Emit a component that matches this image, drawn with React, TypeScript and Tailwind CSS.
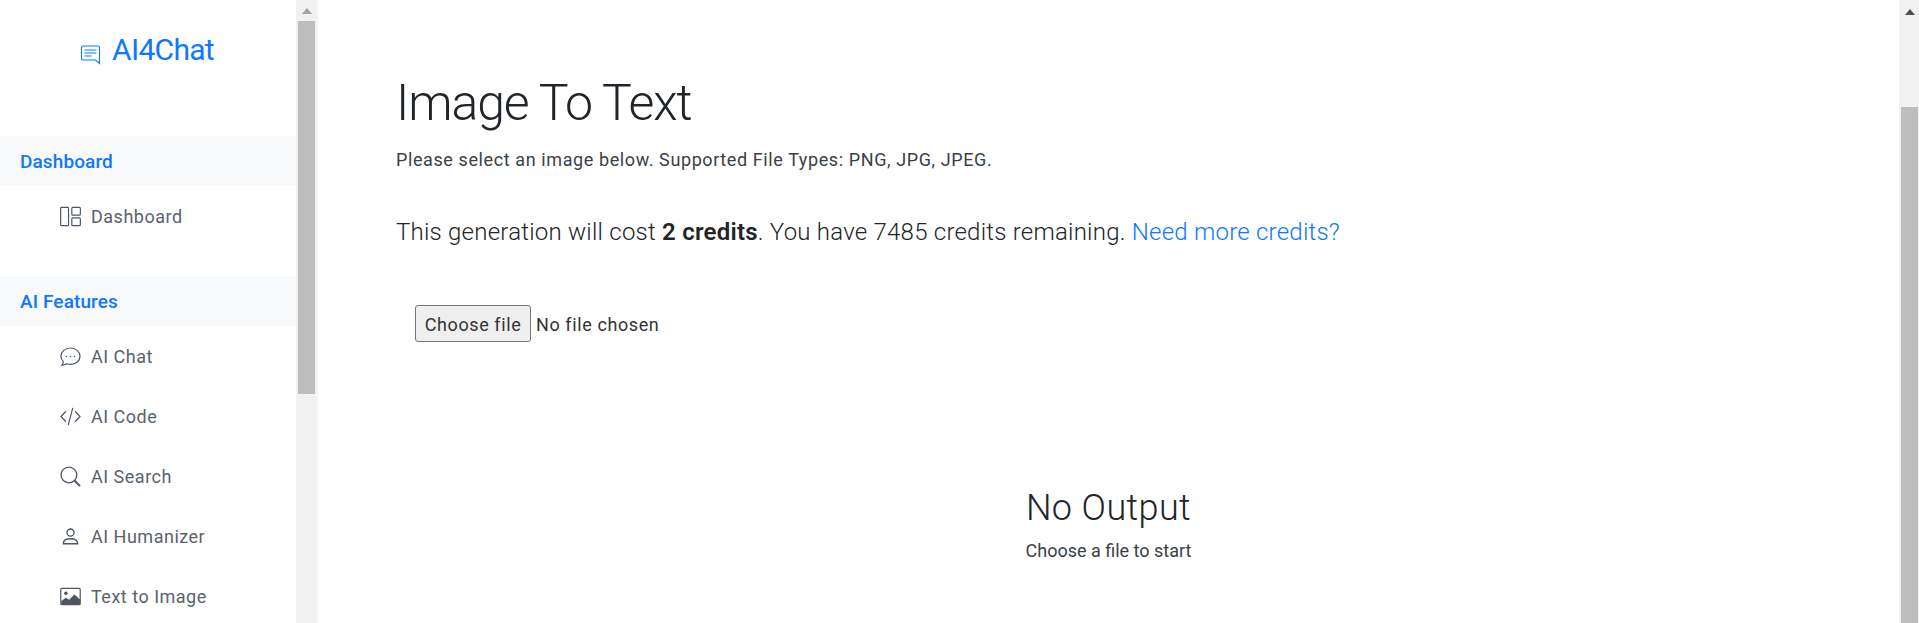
import React from "react";

const Icon = ({ children }: { children: React.ReactNode }) => (
  <svg width="21" height="21" viewBox="0 0 16 16" fill="none" stroke="#4b5563" strokeWidth="0.9" className="shrink-0">{children}</svg>
);

function Item({ icon, label }: { icon: React.ReactNode; label: string }) {
  return (
    <div className="flex h-[60px] shrink-0 items-center gap-[10px] pt-[1px] pl-[60px] text-[18px] tracking-[0.5px] text-[#5a6270]">
      {icon}
      <span>{label}</span>
    </div>
  );
}

function Section({ label }: { label: string }) {
  return (
    <div className="flex h-[50px] shrink-0 items-center bg-[#f8f9fa] pt-[2px] pl-[20px] text-[19px] font-medium tracking-[0.1px] text-[#0d78ff]">{label}</div>
  );
}

export default function App() {
  return (
    <div className="flex h-[623px] w-[1919px] overflow-hidden bg-white font-['Roboto',sans-serif]">
      <aside className="flex w-[296px] shrink-0 flex-col">
        <div className="flex h-[136px] shrink-0 items-start justify-center gap-[11px] pt-[32px] pr-[2px]">
          <svg width="21" height="21" viewBox="0 0 21 21" fill="none" stroke="#0d78ff" strokeWidth="1.1" className="mt-[12px]">
            <path d="M3 2h15a1.5 1.5 0 0 1 1.500 1.500v16l-4-3.500H3a1.500 1.500 0 0 1-1.500-1.500v-11A1.500 1.500 0 0 1 3 2z" />
            <path d="M4.500 6h12M4.500 9h12M4.500 12h7" />
          </svg>
          <span className="text-[30px] leading-[36px] tracking-[-0.7px] text-[#0d78ff]">AI4Chat</span>
        </div>
        <Section label="Dashboard" />
        <Item label="Dashboard" icon={<Icon><rect x="0.500" y="1" width="6" height="14" rx="0.6" /><rect x="9" y="1" width="6.500" height="6" rx="0.8" /><rect x="9" y="9" width="6.500" height="6" rx="0.8" /></Icon>} />
        <div className="h-[30px] shrink-0" />
        <Section label="AI Features" />
        <Item label="AI Chat" icon={<Icon><path d="M8 1.500c4 0 7.300 2.800 7.300 6.300S12 14 8 14c-1 0-2-.2-2.900-.5-.8.600-2 1-3.600 1.100.6-.8 1-1.800 1-2.700C1.400 10.800.700 9.400.700 7.800.700 4.300 4 1.500 8 1.500z" /><circle cx="5" cy="8" r="0.6" fill="#4b5563" stroke="none" /><circle cx="8" cy="8" r="0.6" fill="#4b5563" stroke="none" /><circle cx="11" cy="8" r="0.6" fill="#4b5563" stroke="none" /></Icon>} />
        <Item label="AI Code" icon={<Icon><path d="M4.500 4L.700 8l3.800 4M11.500 4l3.800 4-3.800 4M9.700 1.500L6.300 14.500" /></Icon>} />
        <Item label="AI Search" icon={<Icon><circle cx="6.800" cy="6.800" r="6" strokeWidth="1" /><path d="M11 11l4.300 4.300" strokeWidth="1.500" /></Icon>} />
        <Item label="AI Humanizer" icon={<Icon><circle cx="8" cy="5" r="2.700" strokeWidth="1" /><path d="M2.500 13.500c0-2.600 2.500-3.800 5.500-3.800s5.500 1.200 5.500 3.800z" strokeWidth="1" /></Icon>} />
        <Item label="Text to Image" icon={<Icon><rect x="0.600" y="1.800" width="14.800" height="12.400" rx="0.8" /><circle cx="4.500" cy="5.500" r="1.300" fill="#4b5563" stroke="none" /><path d="M1 14v-2.500l3.500-2.500 2.500 1.500 4-4 4.500 4V14z" fill="#4b5563" stroke="none" /></Icon>} />
      </aside>

      <div className="flex w-[20px] shrink-0 flex-col bg-[#f1f1f1] pl-[2px]">
        <div className="flex h-[21px] w-[17px] items-center justify-center">
          <svg width="10" height="6" viewBox="0 0 10 6"><path d="M5 0l5 6H0z" fill="#a3a3a3" /></svg>
        </div>
        <div className="h-[373px] w-[17px] bg-[#bdbdbd]" />
      </div>
      <div className="w-[3px] shrink-0 bg-gradient-to-r from-[#efefef] to-white" />

      <main className="flex min-w-0 flex-1 flex-col pt-[73px] pl-[77px] text-[#212529]">
        <h1 className="text-[50px] leading-[60px] font-light tracking-[-1.1px]">Image To Text</h1>
        <p className="mt-[15px] text-[18px] leading-[24px] tracking-[0.6px] text-[#3a3f45]">Please select an image below. Supported File Types: PNG, JPG, JPEG.</p>
        <p className="mt-[42px] text-[24px] leading-[36px] font-light tracking-[0.23px]">
          This generation will cost <b className="font-semibold">2 credits</b>. You have 7485 credits remaining. <a className="text-[#0d78ff]">Need more credits?</a>
        </p>
        <div className="mt-[55px] ml-[19px] flex items-center gap-[5px] text-[18px] tracking-[0.6px] text-[#333]">
          <button className="h-[37px] w-[116px] rounded-[3px] border border-[#767676] bg-[#efefef] pt-[1px] text-[18px] tracking-[0.6px]">Choose file</button>
          <span className="pt-[1px]">No file chosen</span>
        </div>
        <div className="mt-[144px] flex flex-col items-center pr-[78px]">
          <h2 className="text-[36px] leading-[44px] font-light tracking-[0.4px]">No Output</h2>
          <p className="mt-[9px] text-[18px] leading-[24px] text-[#3a3f45]">Choose a file to start</p>
        </div>
      </main>

      <div className="flex w-[20px] shrink-0 flex-col bg-[#f1f1f1] pl-[2px]">
        <div className="flex h-[107px] w-[17px] justify-center pt-[9px]">
          <svg width="10" height="6" viewBox="0 0 10 6"><path d="M5 0l5 6H0z" fill="#505050" /></svg>
        </div>
        <div className="w-[17px] flex-1 bg-[#bdbdbd]" />
      </div>
    </div>
  );
}
